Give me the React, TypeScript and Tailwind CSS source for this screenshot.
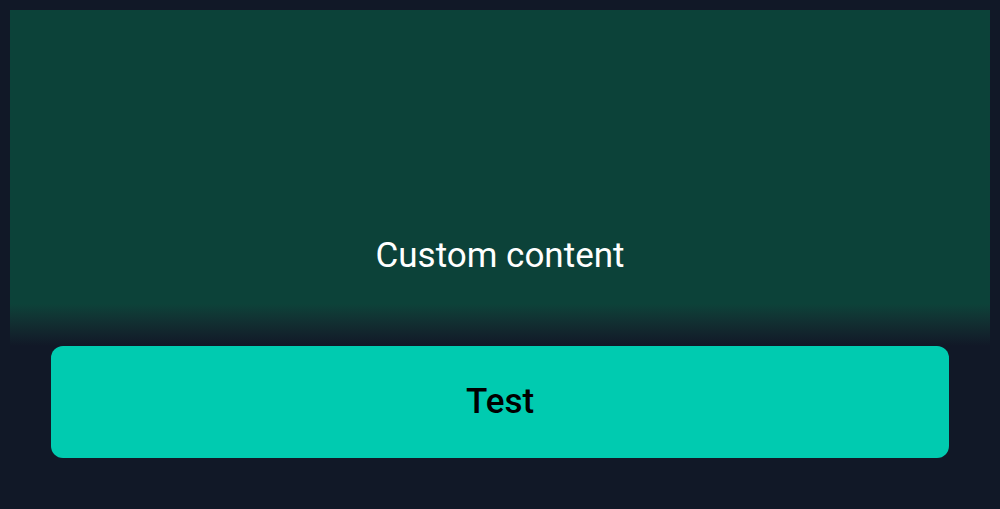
export default function App() {
  return (
    <div
      className="flex h-[509px] w-full flex-col bg-[#111827] px-[10px] pt-[10px]"
      style={{ fontFamily: 'Roboto, "Noto Sans", sans-serif' }}
    >
      {/* Content panel */}
      <div className="relative flex h-[336px] flex-col items-center justify-end bg-[#0c4239] pb-[73px]">
        <p className="text-[35px] leading-none text-white">Custom content</p>
        <div className="absolute inset-x-0 bottom-0 h-[42px] bg-gradient-to-b from-[#0c4239] to-[#111827]" />
      </div>

      {/* Action */}
      <div className="px-[41px]">
        <button className="flex h-[112px] w-full items-center justify-center rounded-xl bg-[#00cbb0] text-[35px] font-medium text-black">
          Test
        </button>
      </div>
    </div>
  );
}
